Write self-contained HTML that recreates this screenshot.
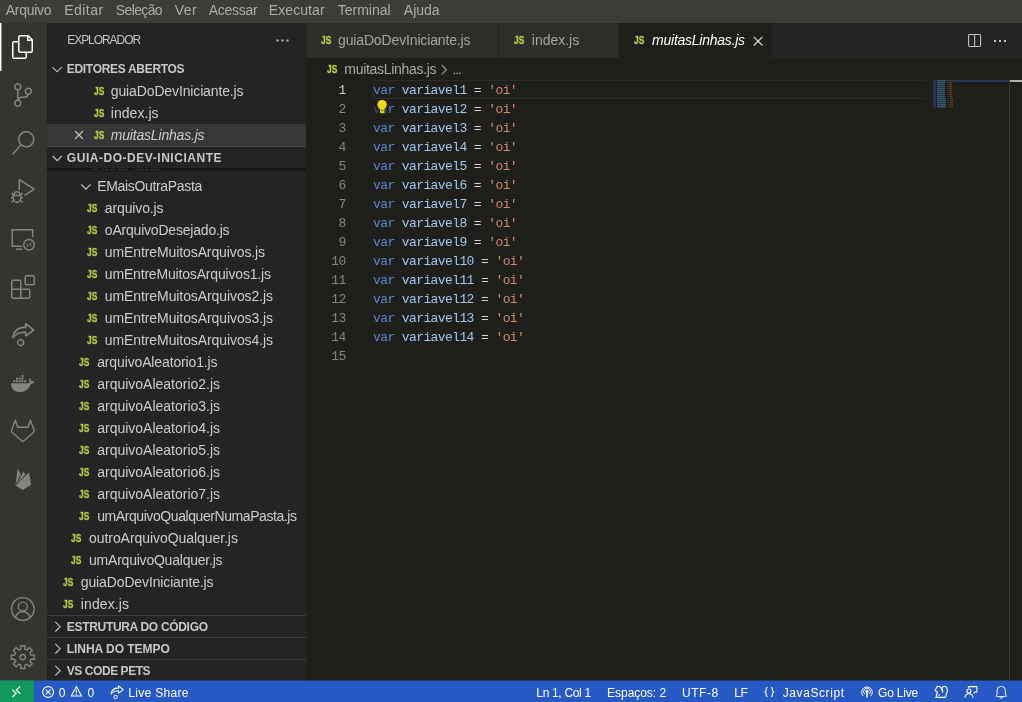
<!DOCTYPE html>
<html><head><meta charset="utf-8"><title>muitasLinhas.js</title>
<style>
html,body{margin:0;padding:0;overflow:hidden;}
body{width:1022px;height:702px;overflow:hidden;background:#1e1e1a;font-family:"Liberation Sans",sans-serif;position:relative;}
.b{position:absolute;}
.t{position:absolute;white-space:pre;color:#cccccc;}
.js{position:absolute;font-family:"Liberation Sans",sans-serif;font-weight:bold;font-size:10.5px;line-height:12px;color:#b5cc42;transform-origin:0 0;transform:scaleX(0.8);-webkit-text-stroke:0.3px #b5cc42;}
.code{position:absolute;left:373px;font-family:"Liberation Mono",monospace;font-size:13px;letter-spacing:-0.6px;line-height:19px;height:19px;white-space:pre;color:#d4d4d4;}
.ln{position:absolute;left:306px;width:39.6px;text-align:right;font-family:"Liberation Mono",monospace;font-size:13px;letter-spacing:-0.6px;line-height:19px;height:19px;color:#858585;}
.k{color:#5b87c8;} .v{color:#a0c6f0;} .s{color:#cf8c6c;}
svg{position:absolute;overflow:visible;}
</style></head><body><div id="root" style="position:absolute;left:0;top:0;width:1022px;height:702px;will-change:transform;">

<div class="b" style="left:0;top:0;width:1022px;height:23px;background:#3c3c38"></div>
<div class="b" style="left:0;top:23px;width:47px;height:658px;background:#343430"></div>
<div class="b" style="left:47px;top:23px;width:259px;height:658px;background:#232524"></div>
<div class="b" style="left:306px;top:23px;width:716px;height:35px;background:#232524"></div>
<div class="b" style="left:306px;top:23px;width:192px;height:35px;background:#2d2d2a"></div>
<div class="b" style="left:499px;top:23px;width:119px;height:35px;background:#2d2d2a"></div>
<div class="b" style="left:619px;top:23px;width:153px;height:35px;background:#1e1e1a"></div>
<div class="b" style="left:47px;top:124px;width:259px;height:22px;background:#37373a"></div>
<div class="b" style="left:47px;top:615px;width:259px;height:1px;background:#3e3e3b"></div>
<div class="b" style="left:47px;top:637px;width:259px;height:1px;background:#3e3e3b"></div>
<div class="b" style="left:47px;top:659px;width:259px;height:1px;background:#3e3e3b"></div>
<div class="b" style="left:47px;top:146px;width:259px;height:1px;background:#494b48"></div>
<div class="b" style="left:47px;top:168px;width:259px;height:3px;overflow:hidden"><span class="t" style="left:43px;top:-13.4px;font-size:14px;line-height:20px;color:#9a9a96">OutraPasta</span></div>
<div class="b" style="left:47px;top:168px;width:259px;height:4px;background:linear-gradient(rgba(14,14,13,0.95),rgba(18,18,17,0.55) 55%,rgba(21,21,20,0))"></div>
<div class="b" style="left:0;top:680px;width:1022px;height:1px;background:#2659c4;opacity:0.5"></div>
<div class="b" style="left:0;top:680px;width:34px;height:1px;background:#10995a;opacity:0.5"></div>
<div class="b" style="left:0;top:681px;width:1022px;height:21px;background:#2659c4"></div>
<div class="b" style="left:0;top:681px;width:34px;height:21px;background:#10995a"></div>
<div class="b" style="left:0;top:23px;width:1px;height:48px;background:#ffffff"></div><div class="b" style="left:1px;top:23px;width:1px;height:48px;background:rgba(255,255,255,0.45)"></div>
<div class="b" style="left:373px;top:80px;width:552px;height:17px;border:1px solid #2c2c29;border-right:none"></div>
<div class="b" style="left:933px;top:80px;width:76px;height:2px;background:#263a5e"></div>
<div class="b" style="left:1009px;top:80px;width:1px;height:601px;background:#3a3a37"></div>
<div class="b" style="left:1010px;top:80px;width:12px;height:2px;background:#b0b0ac"></div>
<div class="b" style="left:933px;top:80px;width:3px;height:2px;background:#263c60"></div><div class="b" style="left:937px;top:80px;width:8px;height:2px;background:#33566c"></div><div class="b" style="left:947px;top:80px;width:1px;height:2px;background:#3a3a3a"></div><div class="b" style="left:949px;top:80px;width:3px;height:2px;background:#57392b"></div><div class="b" style="left:933px;top:81px;width:20px;height:1px;background:rgba(30,30,26,0.55)"></div><div class="b" style="left:933px;top:82px;width:3px;height:2px;background:#263c60"></div><div class="b" style="left:937px;top:82px;width:8px;height:2px;background:#33566c"></div><div class="b" style="left:947px;top:82px;width:1px;height:2px;background:#3a3a3a"></div><div class="b" style="left:949px;top:82px;width:3px;height:2px;background:#57392b"></div><div class="b" style="left:933px;top:83px;width:20px;height:1px;background:rgba(30,30,26,0.55)"></div><div class="b" style="left:933px;top:84px;width:3px;height:2px;background:#263c60"></div><div class="b" style="left:937px;top:84px;width:8px;height:2px;background:#33566c"></div><div class="b" style="left:947px;top:84px;width:1px;height:2px;background:#3a3a3a"></div><div class="b" style="left:949px;top:84px;width:3px;height:2px;background:#57392b"></div><div class="b" style="left:933px;top:85px;width:20px;height:1px;background:rgba(30,30,26,0.55)"></div><div class="b" style="left:933px;top:86px;width:3px;height:2px;background:#263c60"></div><div class="b" style="left:937px;top:86px;width:8px;height:2px;background:#33566c"></div><div class="b" style="left:947px;top:86px;width:1px;height:2px;background:#3a3a3a"></div><div class="b" style="left:949px;top:86px;width:3px;height:2px;background:#57392b"></div><div class="b" style="left:933px;top:87px;width:20px;height:1px;background:rgba(30,30,26,0.55)"></div><div class="b" style="left:933px;top:88px;width:3px;height:2px;background:#263c60"></div><div class="b" style="left:937px;top:88px;width:8px;height:2px;background:#33566c"></div><div class="b" style="left:947px;top:88px;width:1px;height:2px;background:#3a3a3a"></div><div class="b" style="left:949px;top:88px;width:3px;height:2px;background:#57392b"></div><div class="b" style="left:933px;top:89px;width:20px;height:1px;background:rgba(30,30,26,0.55)"></div><div class="b" style="left:933px;top:90px;width:3px;height:2px;background:#263c60"></div><div class="b" style="left:937px;top:90px;width:8px;height:2px;background:#33566c"></div><div class="b" style="left:947px;top:90px;width:1px;height:2px;background:#3a3a3a"></div><div class="b" style="left:949px;top:90px;width:3px;height:2px;background:#57392b"></div><div class="b" style="left:933px;top:91px;width:20px;height:1px;background:rgba(30,30,26,0.55)"></div><div class="b" style="left:933px;top:92px;width:3px;height:2px;background:#263c60"></div><div class="b" style="left:937px;top:92px;width:8px;height:2px;background:#33566c"></div><div class="b" style="left:947px;top:92px;width:1px;height:2px;background:#3a3a3a"></div><div class="b" style="left:949px;top:92px;width:3px;height:2px;background:#57392b"></div><div class="b" style="left:933px;top:93px;width:20px;height:1px;background:rgba(30,30,26,0.55)"></div><div class="b" style="left:933px;top:94px;width:3px;height:2px;background:#263c60"></div><div class="b" style="left:937px;top:94px;width:8px;height:2px;background:#33566c"></div><div class="b" style="left:947px;top:94px;width:1px;height:2px;background:#3a3a3a"></div><div class="b" style="left:949px;top:94px;width:3px;height:2px;background:#57392b"></div><div class="b" style="left:933px;top:95px;width:20px;height:1px;background:rgba(30,30,26,0.55)"></div><div class="b" style="left:933px;top:96px;width:3px;height:2px;background:#263c60"></div><div class="b" style="left:937px;top:96px;width:8px;height:2px;background:#33566c"></div><div class="b" style="left:947px;top:96px;width:1px;height:2px;background:#3a3a3a"></div><div class="b" style="left:949px;top:96px;width:3px;height:2px;background:#57392b"></div><div class="b" style="left:933px;top:97px;width:20px;height:1px;background:rgba(30,30,26,0.55)"></div><div class="b" style="left:933px;top:98px;width:3px;height:2px;background:#263c60"></div><div class="b" style="left:937px;top:98px;width:9px;height:2px;background:#33566c"></div><div class="b" style="left:948px;top:98px;width:1px;height:2px;background:#3a3a3a"></div><div class="b" style="left:950px;top:98px;width:3px;height:2px;background:#57392b"></div><div class="b" style="left:933px;top:99px;width:20px;height:1px;background:rgba(30,30,26,0.55)"></div><div class="b" style="left:933px;top:100px;width:3px;height:2px;background:#263c60"></div><div class="b" style="left:937px;top:100px;width:9px;height:2px;background:#33566c"></div><div class="b" style="left:948px;top:100px;width:1px;height:2px;background:#3a3a3a"></div><div class="b" style="left:950px;top:100px;width:3px;height:2px;background:#57392b"></div><div class="b" style="left:933px;top:101px;width:20px;height:1px;background:rgba(30,30,26,0.55)"></div><div class="b" style="left:933px;top:102px;width:3px;height:2px;background:#263c60"></div><div class="b" style="left:937px;top:102px;width:9px;height:2px;background:#33566c"></div><div class="b" style="left:948px;top:102px;width:1px;height:2px;background:#3a3a3a"></div><div class="b" style="left:950px;top:102px;width:3px;height:2px;background:#57392b"></div><div class="b" style="left:933px;top:103px;width:20px;height:1px;background:rgba(30,30,26,0.55)"></div><div class="b" style="left:933px;top:104px;width:3px;height:2px;background:#263c60"></div><div class="b" style="left:937px;top:104px;width:9px;height:2px;background:#33566c"></div><div class="b" style="left:948px;top:104px;width:1px;height:2px;background:#3a3a3a"></div><div class="b" style="left:950px;top:104px;width:3px;height:2px;background:#57392b"></div><div class="b" style="left:933px;top:105px;width:20px;height:1px;background:rgba(30,30,26,0.55)"></div><div class="b" style="left:933px;top:106px;width:3px;height:2px;background:#263c60"></div><div class="b" style="left:937px;top:106px;width:9px;height:2px;background:#33566c"></div><div class="b" style="left:948px;top:106px;width:1px;height:2px;background:#3a3a3a"></div><div class="b" style="left:950px;top:106px;width:3px;height:2px;background:#57392b"></div><div class="b" style="left:933px;top:107px;width:20px;height:1px;background:rgba(30,30,26,0.55)"></div>
<span class="t" id="m0" style="left:5.8px;top:0.2px;font-size:14px;line-height:20px;letter-spacing:-0.280px;color:#acaca8">Arquivo</span>
<span class="t" id="m1" style="left:64.3px;top:0.2px;font-size:14px;line-height:20px;letter-spacing:0.445px;color:#acaca8">Editar</span>
<span class="t" id="m2" style="left:115.8px;top:0.2px;font-size:14px;line-height:20px;letter-spacing:-0.632px;color:#acaca8">Seleção</span>
<span class="t" id="m3" style="left:174.8px;top:0.2px;font-size:14px;line-height:20px;letter-spacing:0.389px;color:#acaca8">Ver</span>
<span class="t" id="m4" style="left:208.8px;top:0.2px;font-size:14px;line-height:20px;letter-spacing:-0.296px;color:#acaca8">Acessar</span>
<span class="t" id="m5" style="left:268.8px;top:0.2px;font-size:14px;line-height:20px;letter-spacing:0.078px;color:#acaca8">Executar</span>
<span class="t" id="m6" style="left:337.8px;top:0.2px;font-size:14px;line-height:20px;letter-spacing:-0.016px;color:#acaca8">Terminal</span>
<span class="t" id="m7" style="left:403.8px;top:0.2px;font-size:14px;line-height:20px;letter-spacing:-0.003px;color:#acaca8">Ajuda</span>
<span class="t" id="h0" style="left:67.3px;top:30.2px;font-size:12px;line-height:20px;letter-spacing:-1.064px;color:#c4c4c0">EXPLORADOR</span>
<span class="t" id="h1" style="left:66.8px;top:58.5px;font-size:12px;line-height:20px;letter-spacing:-0.312px;font-weight:bold;color:#c8c8c4">EDITORES ABERTOS</span>
<span class="t" id="h2" style="left:66.8px;top:147.5px;font-size:12px;line-height:20px;letter-spacing:0.540px;font-weight:bold;color:#c8c8c4">GUIA-DO-DEV-INICIANTE</span>
<span class="t" id="h3" style="left:66.8px;top:616.5px;font-size:12px;line-height:20px;letter-spacing:-0.317px;font-weight:bold;color:#c8c8c4">ESTRUTURA DO CÓDIGO</span>
<span class="t" id="h4" style="left:66.8px;top:638.5px;font-size:12px;line-height:20px;letter-spacing:-0.043px;font-weight:bold;color:#c8c8c4">LINHA DO TEMPO</span>
<span class="t" id="h5" style="left:66.8px;top:660.5px;font-size:12px;line-height:20px;letter-spacing:-0.445px;font-weight:bold;color:#c8c8c4">VS CODE PETS</span>
<span class="t" id="o0" style="left:110.8px;top:80.5px;font-size:14px;line-height:20px;letter-spacing:-0.131px;">guiaDoDevIniciante.js</span>
<span class="t" id="o1" style="left:110.8px;top:102.5px;font-size:14px;line-height:20px;letter-spacing:0.045px;">index.js</span>
<span class="t" id="o2" style="left:110.8px;top:124.5px;font-size:14px;line-height:20px;letter-spacing:-0.193px;font-style:italic">muitasLinhas.js</span>
<span class="t" id="t0" style="left:97.2px;top:175.5px;font-size:14px;line-height:20px;letter-spacing:-0.329px;">EMaisOutraPasta</span>
<span class="t" id="t1" style="left:104.8px;top:197.5px;font-size:14px;line-height:20px;letter-spacing:-0.125px;">arquivo.js</span>
<span class="t" id="t2" style="left:104.8px;top:219.5px;font-size:14px;line-height:20px;letter-spacing:-0.201px;">oArquivoDesejado.js</span>
<span class="t" id="t3" style="left:104.8px;top:241.5px;font-size:14px;line-height:20px;letter-spacing:-0.101px;">umEntreMuitosArquivos.js</span>
<span class="t" id="t4" style="left:104.8px;top:263.5px;font-size:14px;line-height:20px;letter-spacing:-0.175px;">umEntreMuitosArquivos1.js</span>
<span class="t" id="t5" style="left:104.8px;top:285.5px;font-size:14px;line-height:20px;letter-spacing:-0.092px;">umEntreMuitosArquivos2.js</span>
<span class="t" id="t6" style="left:104.8px;top:307.5px;font-size:14px;line-height:20px;letter-spacing:-0.092px;">umEntreMuitosArquivos3.js</span>
<span class="t" id="t7" style="left:104.8px;top:329.5px;font-size:14px;line-height:20px;letter-spacing:-0.092px;">umEntreMuitosArquivos4.js</span>
<span class="t" id="t8" style="left:97.2px;top:351.5px;font-size:14px;line-height:20px;letter-spacing:-0.135px;">arquivoAleatorio1.js</span>
<span class="t" id="t9" style="left:97.2px;top:373.5px;font-size:14px;line-height:20px;letter-spacing:-0.003px;">arquivoAleatorio2.js</span>
<span class="t" id="t10" style="left:97.2px;top:395.5px;font-size:14px;line-height:20px;letter-spacing:-0.003px;">arquivoAleatorio3.js</span>
<span class="t" id="t11" style="left:97.2px;top:417.5px;font-size:14px;line-height:20px;letter-spacing:-0.003px;">arquivoAleatorio4.js</span>
<span class="t" id="t12" style="left:97.2px;top:439.5px;font-size:14px;line-height:20px;letter-spacing:-0.003px;">arquivoAleatorio5.js</span>
<span class="t" id="t13" style="left:97.2px;top:461.5px;font-size:14px;line-height:20px;letter-spacing:-0.003px;">arquivoAleatorio6.js</span>
<span class="t" id="t14" style="left:97.2px;top:483.5px;font-size:14px;line-height:20px;letter-spacing:-0.003px;">arquivoAleatorio7.js</span>
<span class="t" id="t15" style="left:97.2px;top:505.5px;font-size:14px;line-height:20px;letter-spacing:-0.423px;">umArquivoQualquerNumaPasta.js</span>
<span class="t" id="t16" style="left:89.0px;top:527.5px;font-size:14px;line-height:20px;letter-spacing:-0.059px;">outroArquivoQualquer.js</span>
<span class="t" id="t17" style="left:89.0px;top:549.5px;font-size:14px;line-height:20px;letter-spacing:-0.219px;">umArquivoQualquer.js</span>
<span class="t" id="t18" style="left:80.8px;top:571.5px;font-size:14px;line-height:20px;letter-spacing:-0.131px;">guiaDoDevIniciante.js</span>
<span class="t" id="t19" style="left:80.8px;top:593.5px;font-size:14px;line-height:20px;letter-spacing:0.104px;">index.js</span>
<span class="t" id="tab0" style="left:338.0px;top:29.6px;font-size:14px;line-height:20px;letter-spacing:-0.141px;color:#a4a4a0">guiaDoDevIniciante.js</span>
<span class="t" id="tab1" style="left:531.8px;top:29.6px;font-size:14px;line-height:20px;letter-spacing:-0.011px;color:#a4a4a0">index.js</span>
<span class="t" id="tab2" style="left:652.1px;top:29.6px;font-size:14px;line-height:20px;letter-spacing:-0.250px;font-style:italic;color:#ffffff">muitasLinhas.js</span>
<span class="t" id="bc0" style="left:344.3px;top:58.6px;font-size:14px;line-height:20px;letter-spacing:-0.300px;color:#a9a9a5">muitasLinhas.js</span>
<span class="t" id="s0" style="left:58.8px;top:682.6px;font-size:12px;line-height:20px;letter-spacing:0.000px;color:#ffffff">0</span>
<span class="t" id="s1" style="left:87.6px;top:682.6px;font-size:12px;line-height:20px;letter-spacing:0.000px;color:#ffffff">0</span>
<span class="t" id="s2" style="left:128.3px;top:682.6px;font-size:12px;line-height:20px;letter-spacing:0.304px;color:#ffffff">Live Share</span>
<span class="t" id="s3" style="left:536.3px;top:682.6px;font-size:12px;line-height:20px;letter-spacing:-0.324px;color:#ffffff">Ln 1, Col 1</span>
<span class="t" id="s4" style="left:607.1px;top:682.6px;font-size:12px;line-height:20px;letter-spacing:-0.041px;color:#ffffff">Espaços: 2</span>
<span class="t" id="s5" style="left:682.1px;top:682.6px;font-size:12px;line-height:20px;letter-spacing:0.500px;color:#ffffff">UTF-8</span>
<span class="t" id="s6" style="left:734.3px;top:682.6px;font-size:12px;line-height:20px;letter-spacing:-0.519px;color:#ffffff">LF</span>
<span class="t" id="s8" style="left:782.8px;top:682.6px;font-size:12px;line-height:20px;letter-spacing:0.575px;color:#ffffff">JavaScript</span>
<span class="t" id="s9" style="left:878.1px;top:682.6px;font-size:12px;line-height:20px;letter-spacing:-0.194px;color:#ffffff">Go Live</span>
<span class="js" style="left:94.0px;top:85.1px">JS</span>
<span class="js" style="left:94.0px;top:107.1px">JS</span>
<span class="js" style="left:94.0px;top:129.1px">JS</span>
<span class="js" style="left:87.4px;top:201.6px">JS</span>
<span class="js" style="left:87.4px;top:223.6px">JS</span>
<span class="js" style="left:87.4px;top:245.6px">JS</span>
<span class="js" style="left:87.4px;top:267.6px">JS</span>
<span class="js" style="left:87.4px;top:289.6px">JS</span>
<span class="js" style="left:87.4px;top:311.6px">JS</span>
<span class="js" style="left:87.4px;top:333.6px">JS</span>
<span class="js" style="left:79.4px;top:355.6px">JS</span>
<span class="js" style="left:79.4px;top:377.6px">JS</span>
<span class="js" style="left:79.4px;top:399.6px">JS</span>
<span class="js" style="left:79.4px;top:421.6px">JS</span>
<span class="js" style="left:79.4px;top:443.6px">JS</span>
<span class="js" style="left:79.4px;top:465.6px">JS</span>
<span class="js" style="left:79.4px;top:487.6px">JS</span>
<span class="js" style="left:79.4px;top:509.6px">JS</span>
<span class="js" style="left:71.4px;top:531.6px">JS</span>
<span class="js" style="left:71.4px;top:553.6px">JS</span>
<span class="js" style="left:63.4px;top:575.6px">JS</span>
<span class="js" style="left:63.4px;top:597.6px">JS</span>
<span class="js" style="left:320.7px;top:34.1px">JS</span>
<span class="js" style="left:514.0px;top:34.1px">JS</span>
<span class="js" style="left:633.5px;top:34.1px">JS</span>
<span class="js" style="left:326.9px;top:63.3px">JS</span>
<div class="ln" style="top:81px;color:#c6c6c6">1</div>
<div class="code" style="top:81px"><span class="k">var</span> <span class="v">variavel1</span> = <span class="s">'oi'</span></div>
<div class="ln" style="top:100px;color:#858585">2</div>
<div class="code" style="top:100px"><span style="color:#3b4c68">va</span><span class="k">r</span> <span class="v">variavel2</span> = <span class="s">'oi'</span></div>
<div class="ln" style="top:119px;color:#858585">3</div>
<div class="code" style="top:119px"><span class="k">var</span> <span class="v">variavel3</span> = <span class="s">'oi'</span></div>
<div class="ln" style="top:138px;color:#858585">4</div>
<div class="code" style="top:138px"><span class="k">var</span> <span class="v">variavel4</span> = <span class="s">'oi'</span></div>
<div class="ln" style="top:157px;color:#858585">5</div>
<div class="code" style="top:157px"><span class="k">var</span> <span class="v">variavel5</span> = <span class="s">'oi'</span></div>
<div class="ln" style="top:176px;color:#858585">6</div>
<div class="code" style="top:176px"><span class="k">var</span> <span class="v">variavel6</span> = <span class="s">'oi'</span></div>
<div class="ln" style="top:195px;color:#858585">7</div>
<div class="code" style="top:195px"><span class="k">var</span> <span class="v">variavel7</span> = <span class="s">'oi'</span></div>
<div class="ln" style="top:214px;color:#858585">8</div>
<div class="code" style="top:214px"><span class="k">var</span> <span class="v">variavel8</span> = <span class="s">'oi'</span></div>
<div class="ln" style="top:233px;color:#858585">9</div>
<div class="code" style="top:233px"><span class="k">var</span> <span class="v">variavel9</span> = <span class="s">'oi'</span></div>
<div class="ln" style="top:252px;color:#858585">10</div>
<div class="code" style="top:252px"><span class="k">var</span> <span class="v">variavel10</span> = <span class="s">'oi'</span></div>
<div class="ln" style="top:271px;color:#858585">11</div>
<div class="code" style="top:271px"><span class="k">var</span> <span class="v">variavel11</span> = <span class="s">'oi'</span></div>
<div class="ln" style="top:290px;color:#858585">12</div>
<div class="code" style="top:290px"><span class="k">var</span> <span class="v">variavel12</span> = <span class="s">'oi'</span></div>
<div class="ln" style="top:309px;color:#858585">13</div>
<div class="code" style="top:309px"><span class="k">var</span> <span class="v">variavel13</span> = <span class="s">'oi'</span></div>
<div class="ln" style="top:328px;color:#858585">14</div>
<div class="code" style="top:328px"><span class="k">var</span> <span class="v">variavel14</span> = <span class="s">'oi'</span></div>
<div class="ln" style="top:347px;color:#858585">15</div>
<svg style="left:10.6px;top:35px" width="24" height="24" viewBox="0 0 24 24" ><path fill="#ffffff" d="M17.5 0h-9L7 1.5V6H2.5L1 7.5v15.07L2.5 24h12.07L16 22.57V18h4.7l1.3-1.43V4.5L17.5 0zm0 2.12l2.38 2.38H17.5V2.12zm-3 20.38h-12v-15H7v9.07L8.5 18h6v4.5zm6-6h-12v-15H16V6h4.5v10.5z"/></svg>
<svg style="left:11.0px;top:83.3px" width="24" height="24" viewBox="0 0 24 24" ><path fill="#85857f" d="M21.007 8.222A3.738 3.738 0 0 0 15.045 5.2a3.737 3.737 0 0 0 1.156 6.583 2.988 2.988 0 0 1-2.668 1.67h-2.99a4.456 4.456 0 0 0-2.989 1.165V7.4a3.737 3.737 0 1 0-1.494 0v9.117a3.776 3.776 0 1 0 1.816.099 2.99 2.99 0 0 1 2.668-1.667h2.99a4.484 4.484 0 0 0 4.223-3.039 3.736 3.736 0 0 0 3.25-3.687zM4.565 3.738a2.242 2.242 0 1 1 4.484 0 2.242 2.242 0 0 1-4.484 0zm4.484 16.441a2.242 2.242 0 1 1-4.484 0 2.242 2.242 0 0 1 4.484 0zm8.221-9.715a2.242 2.242 0 1 1 0-4.485 2.242 2.242 0 0 1 0 4.485z"/></svg>
<svg style="left:11.0px;top:131px" width="24" height="24" viewBox="0 0 24 24" ><path fill="#85857f" d="M15.25 0a8.25 8.25 0 0 0-6.18 13.72L1 22.88l1.12 1 8.05-9.12A8.251 8.251 0 1 0 15.25.01V0zm0 15a6.75 6.75 0 1 1 0-13.5 6.75 6.75 0 0 1 0 13.5z"/></svg>
<svg style="left:10.799999999999999px;top:179px" width="24" height="24" viewBox="0 0 24 24" ><path fill="#85857f" d="M10.94 13.5l-1.32 1.32a3.73 3.73 0 0 0-7.24 0L1.06 13.5 0 14.56l1.72 1.72-.22.22V18H0v1.5h1.5v.08c.077.489.214.966.41 1.42L0 22.94 1.06 24l1.65-1.65A4.308 4.308 0 0 0 6 24a4.31 4.31 0 0 0 3.29-1.65L10.94 24 12 22.94 10.09 21c.198-.464.336-.951.41-1.45v-.1H12V18h-1.5v-1.5l-.22-.22L12 14.56l-1.06-1.06zM6 13.5a2.25 2.25 0 0 1 2.25 2.25h-4.5A2.25 2.25 0 0 1 6 13.5zm3 6a3.33 3.33 0 0 1-3 3 3.33 3.33 0 0 1-3-3v-2.25h6v2.25zm14.76-9.9v1.26L13.5 17.37V15.6l8.5-5.37L9 2v9.46a5.07 5.07 0 0 0-1.5-.72V.63L8.64 0l15.12 9.6z"/></svg>
<svg style="left:0;top:0" width="1022" height="702" viewBox="0 0 1022 702"><g fill="none" stroke="#85857f" stroke-width="1.5"><path d="M32.7 237V229.8H12.2V246.2H22.2"/><path d="M16 249.2H22.2"/><circle cx="29" cy="244.8" r="5.3"/></g><g fill="none" stroke="#85857f" stroke-width="1"><path d="M26.6 243.6l1.7 1.8-1.7 1.8M31.4 242.4l-1.7 1.8 1.7 1.8"/></g></svg>
<svg style="left:11.0px;top:275px" width="24" height="24" viewBox="0 0 24 24" ><path fill="#85857f" d="M13.5 1.5L15 0h7.5L24 1.5V9l-1.5 1.5H15L13.5 9V1.5zm1.5 0V9h7.5V1.5H15zM0 15V6l1.5-1.5H9L10.5 6v7.5H18l1.5 1.5v7.5L18 24H1.5L0 22.5V15zm9-1.5V6H1.5v7.5H9zM9 15H1.5v7.5H9V15zm1.5 7.5H18V15h-7.5v7.5z"/></svg>
<svg style="left:11.0px;top:322px" width="24" height="24" viewBox="0 0 24 24" ><path fill="#85857f" d="M13.735 1.694L15.178 1l8.029 6.328v1.388l-8.029 6.072-1.443-.694v-2.776h-.59c-4.06-.02-6.71.104-10.61 5.163l-1.534-.493a8.23 8.23 0 0 1 .271-2.255 11.026 11.026 0 0 1 3.92-6.793 11.339 11.339 0 0 1 7.502-2.547h1.04v-2.7zm1.804 7.917v2.776l5.676-4.387-5.648-4.442v2.664h-2.86A9.299 9.299 0 0 0 5.24 9.771a10.444 10.444 0 0 0-2.294 4.14c3.309-3.6 6.27-4.3 10.24-4.3h2.353zm-7.904 8.03a3.6 3.6 0 1 1 4 5.986 3.6 3.6 0 0 1-4-5.986zm.8 4.79a2.16 2.16 0 1 0 2.4-3.593 2.16 2.16 0 0 0-2.4 3.593z"/></svg>
<svg style="left:0;top:0" width="1022" height="702" viewBox="0 0 1022 702"><g fill="#85857f"><path d="M11 383.2H29.2C29.8 381.5 29.6 380 28.9 378.8L29.9 378.2C30.9 379 31.4 380.2 31.5 381.2C32.6 380.9 33.6 381 34.5 381.6C33.9 383 32.6 383.9 30.9 383.9C29.2 388.6 25.4 392 19.6 392C14.4 392 11 389 11 383.2Z"/><rect x="13.3" y="380.2" width="2" height="2"/><rect x="16" y="380.2" width="2" height="2"/><rect x="18.7" y="380.2" width="2" height="2"/><rect x="21.4" y="380.2" width="2" height="2"/><rect x="24.1" y="380.2" width="2" height="2"/><rect x="16" y="377.6" width="2" height="2"/><rect x="18.7" y="377.6" width="2" height="2"/><rect x="21.4" y="377.6" width="2" height="2"/><rect x="21.4" y="375" width="2" height="2"/></g></svg>
<svg style="left:0;top:0" width="1022" height="702" viewBox="0 0 1022 702"><path fill="none" stroke="#85857f" stroke-width="1.4" stroke-linejoin="round" d="M15.3 420.2L17.8 427.3H28L30.4 420.2L34.2 430.6C34.4 431.2 34.2 431.8 33.7 432.2L22.9 441.8L12 432.2C11.5 431.8 11.3 431.2 11.5 430.6Z"/></svg>
<svg style="left:0;top:0" width="1022" height="702" viewBox="0 0 1022 702"><g fill="#85857f"><path d="M15.3 485.3L17.8 468.2L20.6 474.6L16.6 482.6Z"/><path d="M17 483.6L23.5 471.4L25.3 474.4Z" /><path d="M15.6 485.6L29 472.3L31.2 484.7L23.6 489.5C23 489.8 22.4 489.8 21.9 489.5Z"/></g></svg>
<svg style="left:0;top:0" width="1022" height="702" viewBox="0 0 1022 702"><g fill="none" stroke="#85857f" stroke-width="1.4"><circle cx="22.8" cy="608.9" r="11.3"/><circle cx="22.8" cy="606.6" r="4.5"/><path d="M15.5 617.3C16.5 613.7 19.4 611.8 22.8 611.8C26.2 611.8 29.1 613.7 30.1 617.3"/></g></svg>
<svg style="left:0;top:0" width="1022" height="702" viewBox="0 0 1022 702"><g fill="none" stroke="#85857f" stroke-width="1.4" stroke-linejoin="round"><path d="M20.79 649.05L20.69 645.69L24.91 645.69L24.81 649.05L27.07 649.99L29.37 647.54L32.36 650.53L29.91 652.83L30.85 655.09L34.21 654.99L34.21 659.21L30.85 659.11L29.91 661.37L32.36 663.67L29.37 666.66L27.07 664.21L24.81 665.15L24.91 668.51L20.69 668.51L20.79 665.15L18.53 664.21L16.23 666.66L13.24 663.67L15.69 661.37L14.75 659.11L11.39 659.21L11.39 654.99L14.75 655.09L15.69 652.83L13.24 650.53L16.23 647.54L18.53 649.99Z"/><circle cx="22.8" cy="657.1" r="2.6"/></g></svg>
<svg style="left:0;top:0" width="1022" height="702" viewBox="0 0 1022 702"><path d="M52.5 67.2L57.1 71.8L61.7 67.2" fill="none" stroke="#c5c5c1" stroke-width="1.1" /><path d="M52.6 156.0L57.2 160.60000000000002L61.800000000000004 156.0" fill="none" stroke="#c5c5c1" stroke-width="1.1" /><path d="M81.30000000000001 184.5L85.9 189.10000000000002L90.5 184.5" fill="none" stroke="#c5c5c1" stroke-width="1.1" /><path d="M55.3 621.9000000000001L60.199999999999996 626.7L55.3 631.5" fill="none" stroke="#c5c5c1" stroke-width="1.1" /><path d="M55.3 643.9000000000001L60.199999999999996 648.7L55.3 653.5" fill="none" stroke="#c5c5c1" stroke-width="1.1" /><path d="M55.3 665.9000000000001L60.199999999999996 670.7L55.3 675.5" fill="none" stroke="#c5c5c1" stroke-width="1.1" /><path d="M441.8 65.2L446.3 69.8L441.8 74.4" fill="none" stroke="#a9a9a5" stroke-width="1.1" /><rect x="453.7" y="72.6" width="1.4" height="1.4" fill="#a9a9a5"/><rect x="456.5" y="72.6" width="1.4" height="1.4" fill="#a9a9a5"/><rect x="459.3" y="72.6" width="1.4" height="1.4" fill="#a9a9a5"/><path d="M75.0 131.0L83.0 139.0M83.0 131.0L75.0 139.0" fill="none" stroke="#c5c5c1" stroke-width="1.1" /><path d="M753.8000000000001 36.900000000000006L762.4 45.5M762.4 36.900000000000006L753.8000000000001 45.5" fill="none" stroke="#e0e0e0" stroke-width="1.1" /><rect x="276.5" y="39.5" width="2" height="2" fill="#c5c5c1"/><rect x="281.5" y="39.5" width="2" height="2" fill="#c5c5c1"/><rect x="286.5" y="39.5" width="2" height="2" fill="#c5c5c1"/><rect x="994" y="40" width="2" height="2" fill="#c5c5c1"/><rect x="999" y="40" width="2" height="2" fill="#c5c5c1"/><rect x="1004" y="40" width="2" height="2" fill="#c5c5c1"/><rect x="968.6" y="34.5" width="12" height="12" rx="1.2" fill="none" stroke="#c5c5c1" stroke-width="1.1"/><path d="M974.6 34.5V46.5" fill="none" stroke="#c5c5c1" stroke-width="1.1" /><circle cx="382.1" cy="104.6" r="4.7" fill="#ecd915"/><rect x="380" y="107" width="4.4" height="6.2" fill="#ecd915"/><rect x="381" y="109.6" width="2.4" height="1.6" fill="#7a6a10"/><path d="M12.4 689.6L16.2 693.3L12.4 697" fill="none" stroke="#ffffff" stroke-width="1.2" /><path d="M20.2 686.4L16.4 690.1L20.2 693.8" fill="none" stroke="#ffffff" stroke-width="1.2" /><circle cx="48.1" cy="692" r="5.4" fill="none" stroke="#ffffff" stroke-width="1.1"/><path d="M45.7 689.6L50.5 694.4M50.5 689.6L45.7 694.4" fill="none" stroke="#ffffff" stroke-width="1.1" /><path d="M76.4 686.6L81.6 696H71.2Z" fill="none" stroke="#ffffff" stroke-width="1.1" stroke-linejoin="round"/><path d="M76.4 689.8V693" fill="none" stroke="#ffffff" stroke-width="1.1" /><rect x="75.8" y="693.9" width="1.2" height="1.2" fill="#ffffff"/><circle cx="867" cy="691.2" r="1.5" fill="#ffffff"/><path d="M867 692V697.6" fill="none" stroke="#ffffff" stroke-width="1.6" /><path d="M864.6 694.0A3.4 3.4 0 1 1 869.4 694.0" fill="none" stroke="#ffffff" stroke-width="1" /><path d="M863.2 696.0A5.3 5.3 0 1 1 870.8 696.0" fill="none" stroke="#ffffff" stroke-width="1" /><path d="M936 697.4H945.2C946.3 696.4 946.4 695 946 694.1C947.5 692.8 947.7 690.6 947.1 689C946.6 687.2 945.9 686.2 944.6 686.2C943 686.2 942.1 687.2 942.1 688.4C942.1 689.6 942.7 690.4 942.9 691.2" fill="none" stroke="#ffffff" stroke-width="1.1" stroke-linejoin="round" stroke-linecap="round"/><path d="M942.6 692.2C942 689.6 941 687.2 939.5 686.5L937.3 686.3L935 690.4L937.5 692.3C936.6 693.4 936.2 694.4 936.4 695.3C936.6 696.3 936.6 696.8 936 697.4" fill="none" stroke="#ffffff" stroke-width="1.1" stroke-linejoin="round" stroke-linecap="round"/><path d="M937.6 695H940" fill="none" stroke="#ffffff" stroke-width="1" /><circle cx="968.9" cy="691" r="2.0" fill="none" stroke="#ffffff" stroke-width="1.1"/><path d="M965 697.8C965.2 695.2 966.8 693.7 968.9 693.7C971 693.7 972.8 695.2 973 697.8" fill="none" stroke="#ffffff" stroke-width="1.1" /><path d="M968.4 688V686.6H976.9V692H975.2L973.6 693.4" fill="none" stroke="#ffffff" stroke-width="1.1" stroke-linejoin="round"/></svg>
<svg style="left:994.4px;top:684.9px" width="14.5" height="14.5" viewBox="0 0 16 16" ><path fill="#ffffff" d="M13.377 10.573a7.63 7.63 0 0 1-.383-2.38V6.195a5.115 5.115 0 0 0-1.268-3.446 5.138 5.138 0 0 0-3.242-1.722c-.694-.072-1.4 0-2.07.227-.67.215-1.28.574-1.794 1.053a4.923 4.923 0 0 0-1.208 1.675 5.067 5.067 0 0 0-.431 2.022v2.2a7.61 7.61 0 0 1-.383 2.37L2 12.343l.479.658h3.505c0 .526.215 1.04.586 1.412.37.37.885.586 1.412.586.526 0 1.04-.215 1.411-.586s.587-.886.587-1.412h3.505l.478-.658-.586-1.77zm-4.69 3.147a.997.997 0 0 1-.705.299.997.997 0 0 1-.706-.3.997.997 0 0 1-.3-.705h1.999a.939.939 0 0 1-.287.706zm-5.515-1.71l.371-1.114a8.633 8.633 0 0 0 .443-2.691V6.004c0-.563.12-1.113.347-1.616.227-.514.55-.969.969-1.34.419-.382.91-.67 1.436-.837.538-.18 1.1-.24 1.65-.18a4.147 4.147 0 0 1 2.597 1.4 4.133 4.133 0 0 1 1.004 2.776v2.01c0 .909.144 1.818.443 2.691l.371 1.113h-9.63v-.012z"/></svg>
<svg style="left:110.3px;top:685.3px" width="14" height="14" viewBox="0 0 24 24" ><path fill="#ffffff" d="M13.735 1.694L15.178 1l8.029 6.328v1.388l-8.029 6.072-1.443-.694v-2.776h-.59c-4.06-.02-6.71.104-10.61 5.163l-1.534-.493a8.23 8.23 0 0 1 .271-2.255 11.026 11.026 0 0 1 3.920-6.793 11.339 11.339 0 0 1 7.502-2.547h1.04v-2.7zm1.804 7.917v2.776l5.676-4.387-5.648-4.442v2.664h-2.86A9.299 9.299 0 0 0 5.240 9.771a10.444 10.444 0 0 0-2.294 4.140c3.309-3.600 6.270-4.300 10.240-4.300h2.353zm-7.904 8.030a3.600 3.600 0 1 1 4 5.986 3.600 3.600 0 0 1-4-5.986zm.8 4.790a2.160 2.160 0 1 0 2.400-3.593 2.160 2.160 0 0 0-2.400 3.593z"/></svg>
<svg style="left:0;top:0" width="1022" height="702" viewBox="0 0 1022 702"><path d="M767.6 687.3C766.2 687.3 766.2 688.3 766.2 689.6C766.2 690.8 765.8 691.6 764.6 691.9C765.8 692.2 766.2 693 766.2 694.2C766.2 695.5 766.2 696.5 767.6 696.5" fill="none" stroke="#ffffff" stroke-width="1.1" /><path d="M771 687.3C772.4 687.3 772.4 688.3 772.4 689.6C772.4 690.8 772.8 691.6 774 691.9C772.8 692.2 772.4 693 772.4 694.2C772.4 695.5 772.4 696.5 771 696.5" fill="none" stroke="#ffffff" stroke-width="1.1" /></svg>
</div></body></html>
